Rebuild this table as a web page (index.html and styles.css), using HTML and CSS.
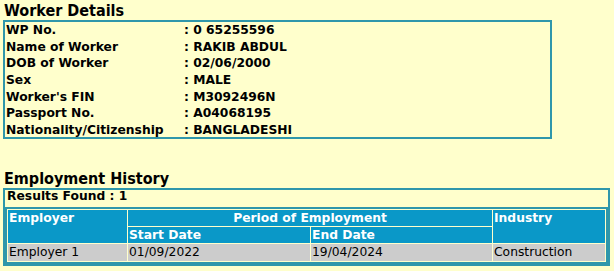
FILE: index.html
```html
<!DOCTYPE html>
<html>
<head>
<meta charset="utf-8">
<link rel="stylesheet" href="styles.css">
</head>
<body>
<div class="page">
  <h2 class="section-title">Worker Details</h2>
  <div class="details">
    <div class="label">WP No.</div><div class="value">: 0 65255596</div>
    <div class="label">Name of Worker</div><div class="value">: RAKIB ABDUL</div>
    <div class="label">DOB of Worker</div><div class="value">: 02/06/2000</div>
    <div class="label">Sex</div><div class="value">: MALE</div>
    <div class="label">Worker's FIN</div><div class="value">: M3092496N</div>
    <div class="label">Passport No.</div><div class="value">: A04068195</div>
    <div class="label">Nationality/Citizenship</div><div class="value">: BANGLADESHI</div>
  </div>

  <h2 class="section-title history-title">Employment History</h2>
  <div class="history">
    <div class="results">Results Found : 1</div>
    <table class="emp-table">
      <colgroup>
        <col class="c-employer"><col class="c-start"><col class="c-end"><col class="c-industry">
      </colgroup>
      <thead>
        <tr class="hrow">
          <th rowspan="2" class="th-top">Employer</th>
          <th colspan="2" class="th-center">Period of Employment</th>
          <th rowspan="2" class="th-top">Industry</th>
        </tr>
        <tr class="hrow">
          <th>Start Date</th>
          <th>End Date</th>
        </tr>
      </thead>
      <tbody>
        <tr class="drow">
          <td>Employer 1</td>
          <td>01/09/2022</td>
          <td>19/04/2024</td>
          <td>Construction</td>
        </tr>
      </tbody>
    </table>
  </div>
</div>
</body>
</html>
```
FILE: styles.css
```css
html, body {
  margin: 0;
  padding: 0;
  background: #ffffcc;
}
body {
  font-family: "DejaVu Sans", sans-serif;
  color: #000;
}
.page {
  padding: 2px 0 0 3px;
}
.section-title {
  margin: 0 0 0 1px;
  font-family: "DejaVu Sans Condensed", "DejaVu Sans", sans-serif;
  font-size: 16px;
  line-height: 18px;
  font-weight: bold;
}
.details {
  box-sizing: border-box;
  width: 549px;
  height: 119px;
  border: 2px solid #2f97ab;
  display: grid;
  grid-template-columns: 178px 1fr;
  grid-auto-rows: 16.67px;
  padding: 0 0 0 1px;
  font-size: 12.3px;
  font-weight: bold;
  line-height: 16.67px;
}
.history-title {
  margin-top: 31px;
}
.history {
  box-sizing: border-box;
  width: 607px;
  border: 2px solid #2f97ab;
  padding: 0;
}
.results {
  font-size: 12.3px;
  font-weight: bold;
  line-height: 12px;
  padding: 0 0 4px 2px;
}
.emp-table {
  width: 100%;
  table-layout: fixed;
  border-collapse: separate;
  border-spacing: 1px;
  border: 2px solid #2f97ab;
  font-size: 12.3px;
  margin-top: 1px;
}
.c-employer { width: 119px; }
.c-start { width: 182px; }
.c-end { width: 181px; }
.emp-table th {
  background: #0a98c8;
  color: #fff;
  font-weight: bold;
  text-align: left;
  padding: 0 1px;
  line-height: 16px;
  height: 16px;
  white-space: nowrap;
}
.emp-table th.th-top {
  vertical-align: top;
}
.emp-table th.th-center {
  text-align: center;
}
.emp-table td {
  background: #cccccc;
  padding: 0 1px;
  line-height: 17px;
  height: 17px;
  white-space: nowrap;
}
```
